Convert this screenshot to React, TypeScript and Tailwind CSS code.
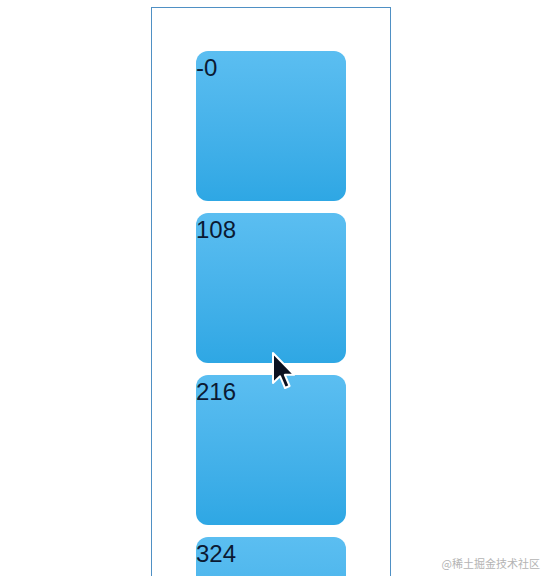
import React from "react";

const items = ["-0", "108", "216", "324"];

export default function App() {
  return (
    <div className="relative w-[554px] h-[576px] overflow-hidden bg-white font-['Noto_Sans',sans-serif]">
      <div className="ml-[151px] mt-[7px] w-[240px] h-[600px] border border-[#4f90c4] pt-[43px] pl-[44px] flex flex-col gap-[12px]">
        {items.map((t) => (
          <div
            key={t}
            className="w-[150px] h-[150px] shrink-0 rounded-[12px] bg-gradient-to-b from-[#5bbef1] to-[#2ea7e4] text-[#0b1a33] text-[24px] leading-[34px] font-['Liberation_Sans',Arial,sans-serif]"
          >
            {t}
          </div>
        ))}
      </div>
      <svg className="absolute left-[271px] top-[351px]" width="26" height="40" viewBox="0 0 13 20">
        <path d="M1 1 L1 16 L4.5 12.6 L7 18.5 L9.3 17.5 L6.9 11.9 L11.6 11.9 Z" fill="#0b1020" stroke="#ffffff" strokeWidth="1" strokeLinejoin="round" />
      </svg>
      <div className="absolute right-[14px] bottom-[5px] text-[11px] text-[#b4b4b4] font-['Noto_Sans_CJK_SC',sans-serif]">
        @稀土掘金技术社区
      </div>
    </div>
  );
}
